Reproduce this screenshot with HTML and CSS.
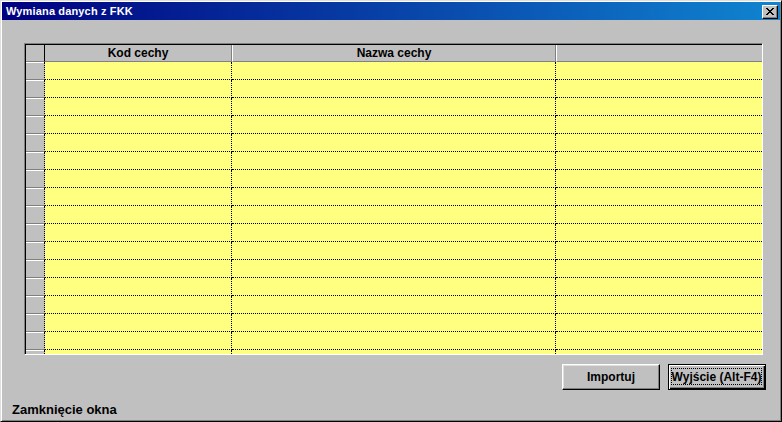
FILE: index.html
```html
<!DOCTYPE html>
<html lang="pl">
<head>
<meta charset="utf-8">
<title>Wymiana danych z FKK</title>
<link rel="stylesheet" href="styles.css">
</head>
<body>
<div class="window">
  <div class="titlebar">
    <span class="title">Wymiana danych z FKK</span>
    <div class="close">
      <svg width="8" height="7" viewBox="0 0 8 7" shape-rendering="crispEdges">
        <path d="M0 0h2v1h-2zM6 0h2v1h-2zM1 1h2v1h-2zM5 1h2v1h-2zM2 2h4v1h-4zM3 3h2v1h-2zM2 4h4v1h-4zM1 5h2v1h-2zM5 5h2v1h-2zM0 6h2v1h-2zM6 6h2v1h-2z" fill="#000"/>
      </svg>
    </div>
  </div>
  <div class="content">
    <div class="grid-frame">
      <div class="grid-head">
        <div class="rh-head"></div>
        <div class="hc c1">Kod cechy</div>
        <div class="hc c2">Nazwa cechy</div>
        <div class="hc c3"></div>
      </div>
      <div class="grid-rows">
        <div class="row"><div class="rh"></div><div class="cell c1"></div><div class="cell c2"></div><div class="cell c3"></div></div>
        <div class="row"><div class="rh"></div><div class="cell c1"></div><div class="cell c2"></div><div class="cell c3"></div></div>
        <div class="row"><div class="rh"></div><div class="cell c1"></div><div class="cell c2"></div><div class="cell c3"></div></div>
        <div class="row"><div class="rh"></div><div class="cell c1"></div><div class="cell c2"></div><div class="cell c3"></div></div>
        <div class="row"><div class="rh"></div><div class="cell c1"></div><div class="cell c2"></div><div class="cell c3"></div></div>
        <div class="row"><div class="rh"></div><div class="cell c1"></div><div class="cell c2"></div><div class="cell c3"></div></div>
        <div class="row"><div class="rh"></div><div class="cell c1"></div><div class="cell c2"></div><div class="cell c3"></div></div>
        <div class="row"><div class="rh"></div><div class="cell c1"></div><div class="cell c2"></div><div class="cell c3"></div></div>
        <div class="row"><div class="rh"></div><div class="cell c1"></div><div class="cell c2"></div><div class="cell c3"></div></div>
        <div class="row"><div class="rh"></div><div class="cell c1"></div><div class="cell c2"></div><div class="cell c3"></div></div>
        <div class="row"><div class="rh"></div><div class="cell c1"></div><div class="cell c2"></div><div class="cell c3"></div></div>
        <div class="row"><div class="rh"></div><div class="cell c1"></div><div class="cell c2"></div><div class="cell c3"></div></div>
        <div class="row"><div class="rh"></div><div class="cell c1"></div><div class="cell c2"></div><div class="cell c3"></div></div>
        <div class="row"><div class="rh"></div><div class="cell c1"></div><div class="cell c2"></div><div class="cell c3"></div></div>
        <div class="row"><div class="rh"></div><div class="cell c1"></div><div class="cell c2"></div><div class="cell c3"></div></div>
        <div class="row"><div class="rh"></div><div class="cell c1"></div><div class="cell c2"></div><div class="cell c3"></div></div>
        <div class="row"><div class="rh"></div><div class="cell c1"></div><div class="cell c2"></div><div class="cell c3"></div></div>
      </div>
    </div>
    <div class="buttons">
      <div class="btn">Importuj</div>
      <div class="btn default"><span class="focus">Wyjście (Alt-F4)</span></div>
    </div>
    <div class="status">Zamknięcie okna</div>
  </div>
</div>
</body>
</html>
```

FILE: styles.css
```css
* { box-sizing: border-box; }
html, body { margin: 0; padding: 0; background: #c0c0c0; }
body { font-family: "Liberation Sans", Arial, sans-serif; }

.window {
  width: 782px;
  height: 422px;
  background: #c0c0c0;
  border: 1px solid;
  border-color: #dfdfdf #000 #000 #dfdfdf;
  box-shadow: inset 1px 1px #fff, inset -1px -1px #808080;
  padding: 1px;
  display: flex;
  flex-direction: column;
}

.titlebar {
  height: 18px;
  background: linear-gradient(to right, #000080, #1084d0);
  display: flex;
  align-items: center;
  justify-content: space-between;
  padding: 0 2px 0 4px;
}
.title {
  color: #fff;
  font-weight: bold;
  font-size: 11px;
  letter-spacing: 0.15px;
  line-height: 18px;
}
.close {
  width: 16px;
  height: 14px;
  margin-top: 1px;
  background: #c0c0c0;
  border: 1px solid;
  border-color: #fff #000 #000 #fff;
  box-shadow: inset -1px -1px #808080;
  display: flex;
  align-items: center;
  justify-content: center;
  padding-right: 1px;
}
.close svg { display: block; }

.content {
  flex: 1;
  display: flex;
  flex-direction: column;
  padding: 23px 17px 0 22px;
}

.grid-frame {
  width: 739px;
  border-top: 1px solid #808080;
  border-left: 1px solid #808080;
  border-right: 1px solid #fff;
  border-bottom: 1px solid #fff;
}
.grid-head, .row {
  display: grid;
  grid-template-columns: 19px 187px 324px 1fr;
  border-left: 1px solid #000;
}
.grid-head {
  height: 18px;
  border-top: 1px solid #000;
}
.rh-head {
  background: #c0c0c0;
  border-right: 1px solid #000;
  border-bottom: 1px solid #808080;
}
.hc {
  background: #c0c0c0;
  border-bottom: 1px solid #808080;
  font-weight: bold;
  font-size: 12px;
  line-height: 16px;
  text-align: center;
  color: #000;
}
.hc.c1 { border-right: 1px solid #808080; }
.hc.c2 { border-left: 1px solid #fff; border-right: 1px solid #808080; }
.hc.c3 { border-left: 1px solid #fff; }

.grid-rows {
  height: 292px;
  overflow: hidden;
}
.row { height: 18px; }
.rh {
  background: #c0c0c0;
  border-right: 1px dotted #000;
  border-bottom: 1px solid #808080;
  box-shadow: inset 0 1px #fff;
}
.cell {
  background: #ffff80;
  border-bottom: 1px dotted #000;
}
.cell.c1, .cell.c2 { border-right: 1px dotted #000; }

.buttons {
  display: flex;
  justify-content: flex-end;
  gap: 8px;
  margin-top: 9px;
  margin-right: -3px;
}
.btn {
  width: 98px;
  height: 26px;
  background: #c0c0c0;
  border: 1px solid;
  border-color: #fff #000 #000 #fff;
  box-shadow: inset -1px -1px #808080, inset 1px 1px #dfdfdf;
  font-weight: bold;
  font-size: 12px;
  color: #000;
  display: flex;
  align-items: center;
  justify-content: center;
}
.btn.default {
  border: 1px solid #000;
  box-shadow: inset 1px 1px #fff, inset -1px -1px #000, inset -2px -2px #808080;
  padding: 3px 4px 4px 3px;
}
.focus {
  flex: 1;
  align-self: stretch;
  border: 1px dotted #000;
  display: flex;
  align-items: center;
  justify-content: center;
  white-space: nowrap;
}

.status {
  margin-top: 12px;
  margin-left: -12px;
  font-weight: bold;
  font-size: 13px;
  color: #000;
  line-height: 16px;
}
```
